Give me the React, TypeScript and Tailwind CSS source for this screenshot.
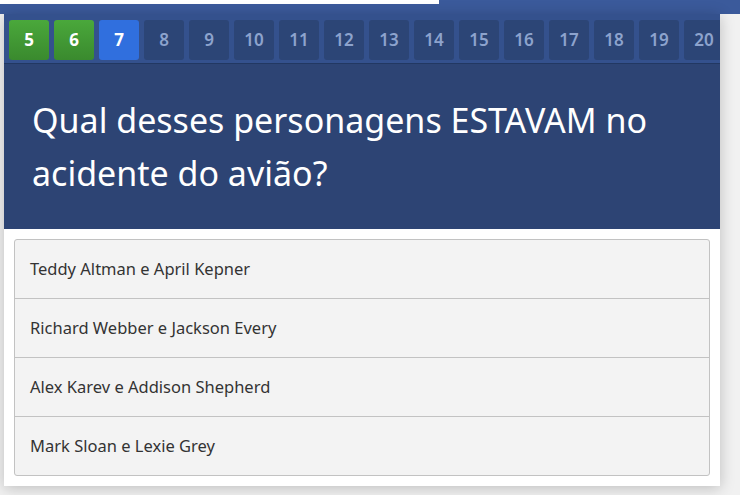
import React from "react";

const nums = [5, 6, 7, 8, 9, 10, 11, 12, 13, 14, 15, 16, 17, 18, 19, 20];
const options = [
  "Teddy Altman e April Kepner",
  "Richard Webber e Jackson Every",
  "Alex Karev e Addison Shepherd",
  "Mark Sloan e Lexie Grey",
];

export default function App() {
  return (
    <div
      className="w-[740px] h-[495px] bg-[#f1f1f1] overflow-hidden"
      style={{ fontFamily: '"Noto Sans", "Open Sans", sans-serif' }}
    >
      <div className="h-[14px] bg-[#3b5a9b]">
        <div className="w-[439px] h-[4px] bg-white" />
      </div>
      <div className="ml-[4px] w-[716px] bg-white shadow-[0_2px_14px_rgba(0,0,0,0.22)]">
        <div className="h-[50px] bg-[#34518d] border-b border-[#223862] overflow-hidden">
          <div className="flex gap-[5px] pt-[6px] pl-[5px] w-max">
            {nums.map((n) => {
              let cls =
                "bg-[#2c4576] text-[#8da3cd] font-semibold";
              if (n === 5 || n === 6)
                cls =
                  "bg-gradient-to-b from-[#4aa83b] to-[#3a8a2e] text-white font-bold";
              if (n === 7) cls = "bg-[#306fde] text-white font-bold";
              return (
                <div
                  key={n}
                  className={`w-[40px] h-[40px] rounded-[3px] flex items-center justify-center text-[17px] ${cls}`}
                >
                  {n}
                </div>
              );
            })}
          </div>
        </div>
        <div className="bg-[#2d4474] h-[165px] pl-[28px] pr-[20px] flex items-center">
          <div className="text-white text-[34px] leading-[53px]">
            Qual desses personagens ESTAVAM no acidente do avião?
          </div>
        </div>
        <div className="p-[10px]">
          <div className="border border-[#c2c2c2] rounded-[3px] bg-[#f3f3f3]">
            {options.map((o, i) => (
              <div
                key={o}
                className={`h-[58px] flex items-center pl-[15px] text-[16.5px] text-[#333333] ${
                  i > 0 ? "border-t border-[#c2c2c2] h-[59px]" : ""
                }`}
              >
                {o}
              </div>
            ))}
          </div>
        </div>
      </div>
    </div>
  );
}
